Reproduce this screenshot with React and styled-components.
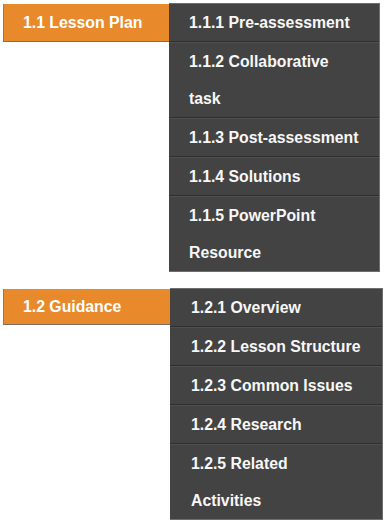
import React from "react";
import styled, { createGlobalStyle } from "styled-components";

const Global = createGlobalStyle`
  html, body { margin: 0; padding: 0; background: #ffffff; }
  body { font-family: "Liberation Sans", Arial, Helvetica, sans-serif; }
`;

const Page = styled.div`
  display: flex;
  flex-direction: column;
  gap: 16px;
  padding: 3px 0 0 3px;
`;

const Block = styled.section`
  display: flex;
  align-items: flex-start;
`;

const Label = styled.div`
  box-sizing: border-box;
  width: ${(p) => p.$w}px;
  height: ${(p) => p.$h}px;
  margin-top: ${(p) => p.$top}px;
  background: #e88a2b;
  border-left: 1px solid #8a7a6a;
  border-bottom: 1px solid #7d6d5e;
  color: #ffffff;
  font-weight: 700;
  font-size: 15.8px;
  line-height: ${(p) => p.$h - 1}px;
  padding-left: 19px;
  white-space: nowrap;
`;

const Panel = styled.ul`
  box-sizing: border-box;
  list-style: none;
  margin: 0;
  padding: 0;
  width: ${(p) => p.$w}px;
  background: #434343;
  border: 1px solid #6e6e6e;
  border-left: none;
`;

const Item = styled.li`
  color: #f7f7f7;
  font-weight: 700;
  font-size: 15.8px;
  line-height: 37px;
  white-space: pre-line;
  padding: 0 20px 0 ${(p) => p.$pad}px;
  border-top: 1px solid #505050;
  border-bottom: 1px solid #2f2f2f;
  &:first-child { border-top: none; }
  &:last-child { border-bottom: none; }
`;

const groups = [
  {
    label: "1.1 Lesson Plan",
    labelW: 166,
    labelH: 38,
    labelTop: 1,
    panelW: 211,
    pad: 20,
    items: [
      "1.1.1 Pre-assessment",
      "1.1.2 Collaborative\ntask",
      "1.1.3 Post-assessment",
      "1.1.4 Solutions",
      "1.1.5 PowerPoint\nResource",
    ],
  },
  {
    label: "1.2 Guidance",
    labelW: 167,
    labelH: 36,
    labelTop: 1,
    panelW: 213,
    pad: 21,
    items: [
      "1.2.1 Overview",
      "1.2.2 Lesson Structure",
      "1.2.3 Common Issues",
      "1.2.4 Research",
      "1.2.5 Related\nActivities",
    ],
  },
];

export default function App() {
  return (
    <>
      <Global />
      <Page>
        {groups.map((g) => (
          <Block key={g.label}>
            <Label $w={g.labelW} $h={g.labelH} $top={g.labelTop}>
              {g.label}
            </Label>
            <Panel $w={g.panelW}>
              {g.items.map((it) => (
                <Item key={it} $pad={g.pad}>
                  {it}
                </Item>
              ))}
            </Panel>
          </Block>
        ))}
      </Page>
    </>
  );
}
